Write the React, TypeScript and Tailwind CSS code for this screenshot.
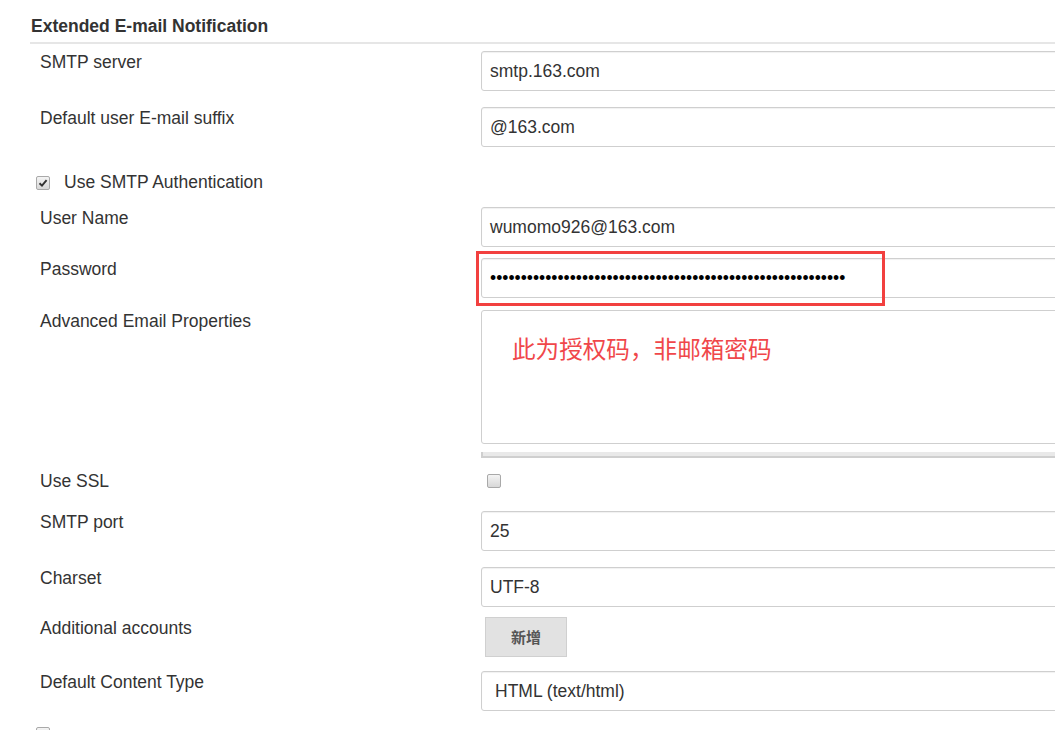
import React from 'react';

const font = { fontFamily: '"Liberation Sans", Arial, sans-serif' };

const Label: React.FC<{ children: React.ReactNode }> = ({ children }) => (
  <div className="w-[451px] shrink-0 pt-px pl-[10px] text-[17.5px] leading-[21px] text-[#333]">{children}</div>
);

const TextBox: React.FC<{ children?: React.ReactNode; className?: string }> = ({ children, className }) => (
  <div
    className={
      'flex h-10 w-[640px] shrink-0 items-center rounded-[3px] border border-[#cfcfcf] bg-white px-2 text-[17.5px] text-[#333] shadow-[inset_0_1px_1px_rgba(0,0,0,0.06)] ' +
      (className ?? '')
    }
  >
    {children}
  </div>
);

const Checkbox: React.FC<{ checked?: boolean }> = ({ checked }) => (
  <div className="flex h-[14px] w-[14px] items-center justify-center rounded-[2px] border border-[#a9a9a9] bg-gradient-to-b from-[#f4f4f4] to-[#d8d8d8]">
    {checked && (
      <svg width="10" height="10" viewBox="0 0 10 10">
        <path d="M1.5 5.2 L4 7.6 L8.6 2.2" fill="none" stroke="#333" strokeWidth="1.9" />
      </svg>
    )}
  </div>
);

export default function App() {
  return (
    <div className="h-[730px] w-full overflow-hidden bg-white pl-[30px]" style={font}>
      <div className="border-b-2 border-[#e6e6e6] pt-4 pb-[5px] pl-px text-[17.5px] leading-[21px] font-bold text-[#333]">
        Extended E-mail Notification
      </div>

      <div className="flex flex-col">
        <div className="mt-[7px] flex">
          <Label>SMTP server</Label>
          <TextBox>smtp.163.com</TextBox>
        </div>

        <div className="mt-4 flex">
          <Label>Default user E-mail suffix</Label>
          <TextBox>@163.com</TextBox>
        </div>

        <div className="mt-[25px] flex items-center gap-[14px] pl-[6px] text-[17.5px] leading-[21px] text-[#333]">
          <Checkbox checked />
          <span>Use SMTP Authentication</span>
        </div>

        <div className="mt-[14px] flex">
          <Label>User Name</Label>
          <TextBox>wumomo926@163.com</TextBox>
        </div>

        <div className="mt-[11px] flex">
          <Label>Password</Label>
          <div className="relative shrink-0">
            <TextBox>
              <span className="text-[17.5px] text-black">{'•'.repeat(58)}</span>
            </TextBox>
            <div className="absolute top-[-7px] left-[-5px] h-[55px] w-[409px] border-[3px] border-[#f2403f]" />
          </div>
        </div>

        <div className="mt-3 flex">
          <Label>Advanced Email Properties</Label>
          <div className="flex shrink-0 flex-col">
            <div className="h-[134px] w-[640px] rounded-[3px] border border-[#cfcfcf] bg-white pt-[22px] pl-[30px]">
              <span
                className="text-[23.6px] leading-[30px] text-[#f0474a]"
                style={{ fontFamily: '"Noto Sans CJK SC", sans-serif' }}
              >
                此为授权码，非邮箱密码
              </span>
            </div>
            <div className="mt-[8px] h-[6px] w-[640px] border-b-2 border-l-2 border-[#cfcfcf] bg-[#e9e9e9]" />
          </div>
        </div>

        <div className="mt-[12px] flex items-center">
          <Label>Use SSL</Label>
          <div className="pl-[6px]">
            <Checkbox />
          </div>
        </div>

        <div className="mt-[19px] flex">
          <Label>SMTP port</Label>
          <TextBox>25</TextBox>
        </div>

        <div className="mt-4 flex">
          <Label>Charset</Label>
          <TextBox>UTF-8</TextBox>
        </div>

        <div className="mt-[10px] flex">
          <Label>Additional accounts</Label>
          <div className="pl-1">
            <button
              className="flex h-10 w-[82px] items-center justify-center border border-[#d0d0d0] bg-[#e2e2e2] text-[15px] font-bold text-[#555]"
              style={{ fontFamily: '"Noto Sans CJK SC", sans-serif' }}
            >
              新增
            </button>
          </div>
        </div>

        <div className="mt-[14px] flex">
          <Label>Default Content Type</Label>
          <TextBox className="pl-[13px]">HTML (text/html)</TextBox>
        </div>

        <div className="mt-[16px] pl-[6px]">
          <Checkbox />
        </div>
      </div>
    </div>
  );
}
